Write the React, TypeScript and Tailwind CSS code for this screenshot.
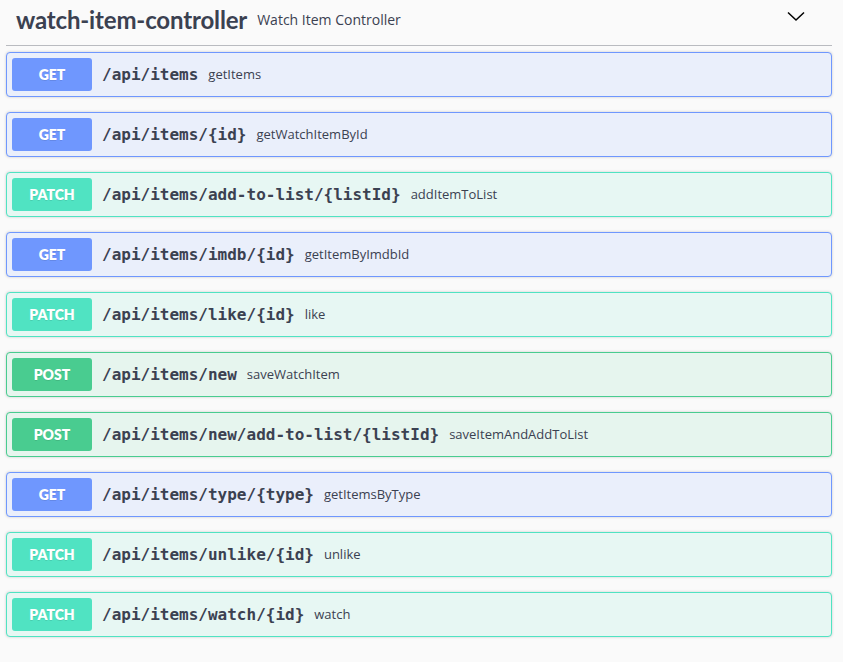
import React from "react";

type Method = "GET" | "PATCH" | "POST";

const ops: { m: Method; path: string; desc: string }[] = [
  { m: "GET", path: "/api/items", desc: "getItems" },
  { m: "GET", path: "/api/items/{id}", desc: "getWatchItemById" },
  { m: "PATCH", path: "/api/items/add-to-list/{listId}", desc: "addItemToList" },
  { m: "GET", path: "/api/items/imdb/{id}", desc: "getItemByImdbId" },
  { m: "PATCH", path: "/api/items/like/{id}", desc: "like" },
  { m: "POST", path: "/api/items/new", desc: "saveWatchItem" },
  { m: "POST", path: "/api/items/new/add-to-list/{listId}", desc: "saveItemAndAddToList" },
  { m: "GET", path: "/api/items/type/{type}", desc: "getItemsByType" },
  { m: "PATCH", path: "/api/items/unlike/{id}", desc: "unlike" },
  { m: "PATCH", path: "/api/items/watch/{id}", desc: "watch" },
];

const styles: Record<Method, { block: string; badge: string }> = {
  GET: { block: "border-[#6f97fe] bg-[#eaeffb]", badge: "bg-[#6f97fe]" },
  PATCH: { block: "border-[#50e3c2] bg-[#e7f7f3]", badge: "bg-[#50e3c2]" },
  POST: { block: "border-[#49cc90] bg-[#e6f5ee]", badge: "bg-[#49cc90]" },
};

export default function App() {
  return (
    <div className="min-h-[662px] w-[843px] bg-[#fafafa] pl-[6px] pr-[11px] text-[#3b4151]">
      <div className="flex h-[46px] items-center border-b border-[#b9bbc0] pb-[6px] pl-[10px] pr-[20px]">
        <span
          className="text-[24px] font-bold leading-none tracking-[-0.15px] text-[#3b4151]"
          style={{ fontFamily: "Lato, 'Open Sans', sans-serif" }}
        >
          watch-item-controller
        </span>
        <span
          className="flex-1 px-[10px] text-[14px] text-[#3b4151]"
          style={{ fontFamily: "'Open Sans', sans-serif" }}
        >
          Watch Item Controller
        </span>
        <svg width="20" height="20" viewBox="0 0 20 20" className="mr-[6px] -mt-[8px]">
          <path d="M2 6.5 L10 14 L18 6.5" fill="none" stroke="#000" strokeWidth="1.5" />
        </svg>
      </div>
      <div className="mt-[6px] flex flex-col gap-[15px]">
        {ops.map((o, i) => (
          <div
            key={i}
            className={`flex h-[45px] items-center rounded-[4px] border px-[5px] shadow-[0_0_3px_rgba(0,0,0,0.19)] ${styles[o.m].block}`}
          >
            <span
              className={`flex h-[33px] w-[80px] items-center justify-center rounded-[3px] text-[14px] font-extrabold text-white [text-shadow:0_1px_0_rgba(0,0,0,0.1)] ${styles[o.m].badge}`}
              style={{ fontFamily: "Lato, 'Open Sans', sans-serif" }}
            >
              {o.m}
            </span>
            <span
              className="px-[10px] pt-[1px] text-[16px] font-bold text-[#3b4151]"
              style={{ fontFamily: "'DejaVu Sans Mono', monospace" }}
            >
              {o.path}
            </span>
            <span
              className="pt-[1px] text-[13px] text-[#3b4151]"
              style={{ fontFamily: "'Open Sans', sans-serif" }}
            >
              {o.desc}
            </span>
          </div>
        ))}
      </div>
    </div>
  );
}
